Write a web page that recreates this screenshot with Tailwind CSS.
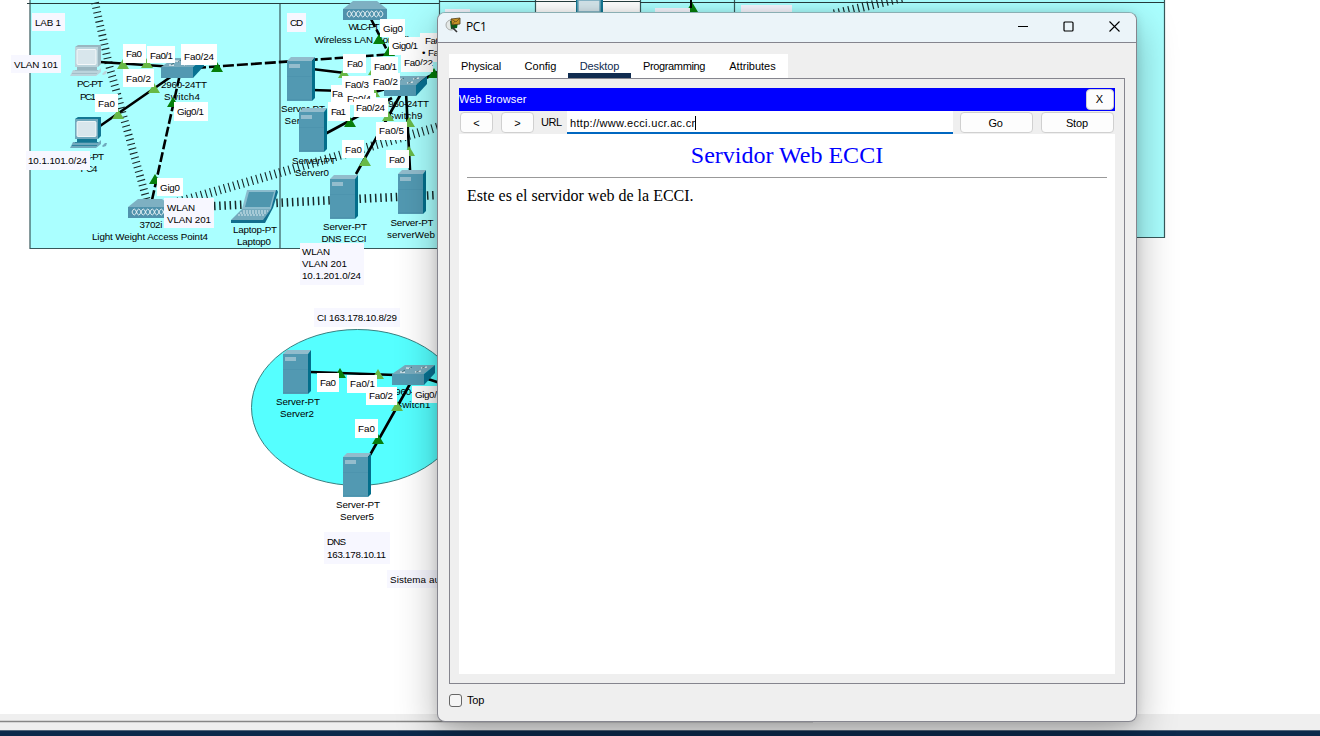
<!DOCTYPE html>
<html lang="es">
<head>
<meta charset="utf-8">
<title>PC1</title>
<script src="https://cdn.jsdelivr.net/npm/@tailwindcss/browser@4"></script>
</head>
<body class="relative h-[736px] w-[1320px] overflow-hidden bg-white font-['Liberation_Sans',sans-serif] text-[11px] text-black">
<!-- Network topology canvas -->
<svg class="absolute inset-0" width="1320" height="736" viewBox="0 0 1320 736" font-family="Liberation Sans, sans-serif" font-size="9.800">
  <defs>
    <g id="server">
      <path d="M0 4L4 0H28L25 4Z" fill="#92bccc"/><path d="M25 4L28 0V41L25 44Z" fill="#036e8b"/>
      <path d="M0 4H25V44H0Z" fill="#5299b2"/><path d="M2 7H13V11H2Z" fill="#94bdcd"/><path d="M0 19.5H25M0 42.5H25" stroke="#4a91ab" stroke-width=".6"/>
    </g>
    <g id="switch">
      <path d="M0 9L13 0H43L32 9Z" fill="#78abbd"/><path d="M32 9L43 0V8L32 20Z" fill="#087292"/><path d="M0 9H32V20H0Z" fill="#5299b2"/>
      <path d="M14 3l5 .3M8 7l5 .3M29 3l6-1M23 7l6-1" stroke="#fff" stroke-width="1.1"/><path d="M17 4l3-2M10 7l3-2M30 3l3-1M24 7l3-1" stroke="#24515f" stroke-width=".7"/>
    </g>
    <g id="ap">
      <path d="M0 8L10 0H34L44 8Z" fill="#7eb0c2"/><path d="M0 8H44V19H0Z" fill="#5092ac"/>
      <path d="M4 13q2.250-6 4.500 0t4.500 0 4.500 0 4.500 0 4.500 0 4.500 0 4.500 0 4.500 0M4 13q2.250 6 4.500 0t4.500 0 4.500 0 4.500 0 4.500 0 4.500 0 4.500 0 4.500 0" fill="none" stroke="#eef6f8" stroke-width=".9"/>
    </g>
    <g id="pc">
      <path d="M5 2L8 0H31V19L28 22H5Z" fill="var(--d)"/><path d="M5 2H28V22H5Z" fill="var(--m)"/><rect x="7" y="4.500" width="19" height="15" rx="1" fill="#d8e6ec" stroke="#fff" stroke-width=".8"/>
      <path d="M7 22H27V25H7Z" fill="var(--d)"/><path d="M3 25H29L31 23V27L26 31H0Z" fill="var(--m)"/><path d="M5 25.500H28M2 28.500H27" stroke="var(--d)" stroke-width=".7"/><path d="M32 29l3-3 2 0-1 3-3 1z" fill="var(--m)"/>
    </g>
    <path id="tri" d="M-6 9L0-1L6 9Z"/>
  </defs>
  <!-- Areas -->
  <path d="M30 0H535V248H30ZM640 0H1164V238H640Z" fill="#aaffff"/>
  <path d="M30 0V248.500H535M280 3V248M439.500 0V248M535.500 0V248M640.500 0V238M734.500 0V238M1164.500 0V237.500H640" fill="none" stroke="#38595b" stroke-width="1.2"/>
  <path d="M27 3.500H439M439 1.500H640M640 2.500H1164" stroke="#263c3d" stroke-width="1.2"/>
  <ellipse cx="357.500" cy="407.500" rx="106" ry="78" fill="#55ffff" stroke="#397f80" stroke-width="1"/>
  <!-- Wireless links -->
  <g fill="none" stroke="#19292a">
    <path d="M94-2L109 65L147 201" stroke-width="8" stroke-dasharray="1.100 3.600"/>
    <path d="M178 202L438 127" stroke-width="9" stroke-dasharray="1.100 3.700"/>
    <path d="M214 206L438 195" stroke-width="8.500" stroke-dasharray="1.500 3.700"/>
    <path d="M834 14L905-3" stroke-width="9" stroke-dasharray="1.200 3.700"/>
  </g>
  <!-- Cables -->
  <g fill="none" stroke="#000" stroke-width="2.600">
    <path d="M100 62L175 67M100 126L172 76M311 372L395 375M415 375L357 478M428 379L440 383"/>
    <path d="M152 200L180 74" stroke-dasharray="10 3"/>
    <path d="M195 68L395 54" stroke-dasharray="11 3"/><path d="M371 19L389 54" stroke-dasharray="9 3"/>
    <path d="M312 69L345 73M312 90L375 92L408 83M325 134L392 98M356 174L402 92M410 170L406 92M416 83L440 71"/>
  </g>
  <!-- Devices -->
  <use href="#pc" x="70" y="45" style="--m:#bbd4dc;--d:#9ab6c0"/>
  <use href="#pc" x="70" y="117" style="--m:#70a9bd;--d:#137793"/>
  <use href="#switch" x="161" y="58"/><use href="#switch" x="384" y="76"/><use href="#switch" x="392" y="365"/>
  <use href="#ap" x="128" y="199"/><use href="#ap" x="343" y="1"/>
  <use href="#server" x="283" y="350"/><use href="#server" x="343" y="453"/><use href="#server" x="287" y="57"/>
  <use href="#server" x="330" y="175"/><use href="#server" x="398" y="170"/>
  <path d="M576 0H603V12H576Z" fill="#137793"/><path d="M578 0H600V12H578Z" fill="#d5e6ec" stroke="#70a9bd" stroke-width="1.500"/>
  <path d="M247 191L249 190H277L278 192L273 208L265 223H262Z" fill="#126f8e"/><path d="M247 190H276L271 209H242Z" fill="#8bbccd"/><path d="M249 192H274L270 207H245Z" fill="#4e96ae"/>
  <path d="M242 209H271L263 220H231Z" fill="#75aabd"/><path d="M231 220H262V223H231Z" fill="#126f8e"/><path d="M243 211H268M240 213H266M238 215H264" stroke="#d7eaf0" stroke-dasharray="2 1"/>
  <!-- Device captions -->
  <g text-anchor="middle">
    <text x="90" y="87" textLength="26">PC-PT</text><text x="88" y="100" textLength="16">PC1</text>
    <text x="91" y="160" textLength="26">PC-PT</text><text x="89" y="172" textLength="17">PC4</text>
    <text x="184" y="88" textLength="46">2960-24TT</text><text x="182" y="100" textLength="36">Switch4</text>
    <text x="151" y="228" textLength="23">3702i</text><text x="150" y="240" textLength="116">Light Weight Access Point4</text>
    <text x="255" y="233" textLength="44">Laptop-PT</text><text x="254" y="245" textLength="34">Laptop0</text>
    <text x="364" y="30" textLength="31">WLC-PT</text><text x="366" y="43" textLength="103">Wireless LAN Controller</text>
    <text x="303" y="112" textLength="44">Server-PT</text><text x="302" y="124" textLength="35">Server1</text>
    <text x="406" y="107" textLength="46">2960-24TT</text><text x="405" y="119" textLength="35">Switch9</text>
    <text x="314" y="164" textLength="44">Server-PT</text><text x="312" y="176" textLength="34">Server0</text>
    <text x="345" y="230" textLength="44">Server-PT</text><text x="344" y="242" textLength="45">DNS ECCI</text>
    <text x="412" y="226" textLength="43">Server-PT</text><text x="411" y="238" textLength="48">serverWeb</text>
    <text x="298" y="405" textLength="44">Server-PT</text><text x="297" y="417" textLength="34">Server2</text>
    <text x="358" y="508" textLength="44">Server-PT</text><text x="357" y="520" textLength="34">Server5</text>
    <text x="413" y="395" textLength="46">2960-24TT</text><text x="413" y="408" textLength="35">Switch1</text>
  </g>
  <use href="#server" x="299" y="108"/>
  <!-- Port status markers -->
  <g fill="#68b946">
    <use href="#tri" x="123" y="60"/><use href="#tri" x="147" y="59"/><use href="#tri" x="154" y="84"/><use href="#tri" x="118" y="110"/>
    <use href="#tri" x="344" y="69"/><use href="#tri" x="374" y="66"/><use href="#tri" x="374" y="88"/><use href="#tri" x="388" y="112"/><use href="#tri" x="409" y="118"/>
    <use href="#tri" x="365" y="157"/><use href="#tri" x="409" y="147"/><use href="#tri" x="378" y="370"/><use href="#tri" x="397" y="402"/>
  </g>
  <g fill="#067f0b">
    <use href="#tri" x="217" y="63"/><use href="#tri" x="173" y="98"/><use href="#tri" x="155" y="175"/><use href="#tri" x="379" y="35"/><use href="#tri" x="389" y="47"/>
    <use href="#tri" x="434" y="69"/><use href="#tri" x="350" y="118"/><use href="#tri" x="340" y="369"/><use href="#tri" x="378" y="435"/><use href="#tri" x="692" y="3"/>
  </g>
  <path d="M691 0V8" stroke="#000" stroke-width="2"/>
  <!-- Port labels -->
  <g fill="#fff">
    <path d="M123 44h23v19h-23zM147 46h28v17h-28zM181 44h36v21h-36zM123 69h31v18h-31zM95 94h23v18h-23zM174 102h34v19h-34zM157 178h26v18h-26z"/>
    <path d="M380 19h25v18h-25zM389 37h31v18h-31zM420 33h18v29h-18zM401 54h32v18h-32zM343 54h23v19h-23zM371 57h27v17h-27zM331 85h18v18h-18zM346 93h30v12h-30zM342 76h32v17h-32zM371 73h29v17h-29zM328 102h22v19h-22zM354 98h34v19h-34zM376 122h31v18h-31zM342 140h22v18h-22zM386 150h23v18h-23z"/>
    <path d="M317 373h22v19h-22zM347 375h30v18h-30zM366 387h31v18h-31zM412 386h26v17h-26zM355 419h23v19h-23z"/>
  </g>
  <text x="126" y="57" textLength="16">Fa0</text><text x="150" y="59" textLength="23">Fa0/1</text><text x="184" y="60" textLength="30">Fa0/24</text>
  <text x="126" y="82" textLength="25">Fa0/2</text><text x="98" y="107" textLength="17">Fa0</text><text x="177" y="115" textLength="27">Gig0/1</text><text x="160" y="191" textLength="20">Gig0</text>
  <text x="383" y="32" textLength="20">Gig0</text><text x="392" y="49" textLength="26">Gig0/1</text><text x="425" y="44" textLength="16">Fa0</text><text x="422" y="56" textLength="4">•</text><text x="428" y="56" textLength="16">Fa0</text>
  <text x="404" y="66" textLength="29">Fa0/22</text><path d="M420 65H432V70H420Z" fill="#fff"/><text x="347" y="67" textLength="16">Fa0</text><text x="374" y="70" textLength="23">Fa0/1</text>
  <text x="332" y="97" textLength="11">Fa</text><text x="347" y="102" textLength="24">Fa0/4</text><path d="M342 76h29v17h-29zM354 99h34v18h-34z" fill="#fff"/>
  <text x="345" y="88" textLength="24">Fa0/3</text><text x="373" y="85" textLength="25">Fa0/2</text><text x="331" y="115" textLength="15">Fa1</text><text x="356" y="111" textLength="29">Fa0/24</text>
  <text x="379" y="134" textLength="25">Fa0/5</text><text x="345" y="153" textLength="17">Fa0</text><text x="389" y="163" textLength="16">Fa0</text>
  <text x="320" y="386" textLength="16">Fa0</text><text x="350" y="387" textLength="25">Fa0/1</text><text x="369" y="399" textLength="24">Fa0/2</text><text x="415" y="398" textLength="27">Gig0/1</text><text x="358" y="432" textLength="17">Fa0</text>
  <!-- Notes -->
  <path d="M32 13h33v18H32zM11 55h50v18H11zM26 151h64v19H26zM164 198h50v30h-50zM287 13h19v19h-19zM300 243h64v42h-64zM314 308h86v19h-86zM324 532h66v32h-66zM387 570h60v18h-60zM445 9h25v10h-25zM655 8h35v10h-35zM741 5h51v10h-51z" fill="#f7f7ff"/>
  <text x="35" y="26" textLength="26">LAB 1</text><text x="14" y="68" textLength="44">VLAN 101</text><text x="28" y="164" textLength="59">10.1.101.0/24</text>
  <text x="167" y="211" textLength="28">WLAN</text><text x="167" y="223" textLength="44">VLAN 201</text><text x="290" y="26" textLength="13">CD</text>
  <text x="302" y="255" textLength="28">WLAN</text><text x="302" y="267" textLength="45">VLAN 201</text><text x="302" y="279" textLength="59">10.1.201.0/24</text>
  <text x="317" y="321" textLength="80">CI 163.178.10.8/29</text><text x="327" y="545" textLength="19">DNS</text><text x="327" y="558" textLength="59">163.178.10.11</text>
  <text x="390" y="583" textLength="97">Sistema autónomo 10</text>
  <!-- Status strip and taskbar -->
  <path d="M0 714H1320V730H0Z" fill="#efefef"/><path d="M0 721.500H813" stroke="#868686" stroke-width="1.500"/><path d="M0 730H1320V736H0Z" fill="#0c294b"/><path d="M0 730.500H1320" stroke="#53657a"/>
</svg>

<!-- PC1 window -->
<main class="absolute left-[437px] top-3 flex h-[710px] w-[700px] flex-col overflow-hidden rounded-lg border border-[#85858e] border-t-[#8aaeb3] bg-[#efefef] shadow-[0_14px_40px_rgba(0,0,0,0.3),0_1px_10px_rgba(0,0,0,0.12)]">
  <header class="flex h-[30px] shrink-0 items-center border-b border-[#85858e] bg-[#ebf4f9] pl-[7px]">
    <svg class="mb-1" width="17" height="17" viewBox="0 0 17 17"><circle cx="6" cy="8" r="5" fill="#e4e8e6" stroke="#a8aaa8"/><path d="M5 4L13 5L12 11L6 12Z" fill="#075c16"/><path d="M6 2L15 1V7L7 8Z" fill="#c69325" stroke="#4d3c1c" stroke-width=".8"/><path d="M6 2L11 5L15 1M7 8l3-4" fill="none" stroke="#65491a" stroke-width=".7"/><path d="M7 10L12 15" stroke="#343434" stroke-width="1.600"/></svg>
    <h1 class="ml-1 flex-1 pb-px font-['Open_Sans',sans-serif] text-[12px] leading-4 tracking-[-0.4px]">PC1</h1>
    <div class="flex items-center gap-[35px] pr-4 pb-[3px]">
      <svg width="10" height="11" viewBox="0 0 10 11"><path d="M0 5.500H10" stroke="#000"/></svg>
      <svg width="11" height="11" viewBox="0 0 11 11"><rect x="1" y="1" width="9" height="9" rx="1" fill="none" stroke="#000" stroke-width="1.200"/></svg>
      <svg width="11" height="11" viewBox="0 0 11 11"><path d="M.5 .5L10.500 10.500M10.500 .5L.5 10.500" stroke="#000" stroke-width="1.100"/></svg>
    </div>
  </header>
  <nav class="ml-[11px] mt-[11px] flex h-6 w-[339px] shrink-0 bg-white text-center leading-6">
    <span class="w-16 tracking-[-0.1px]">Physical</span>
    <span class="w-[55px]">Config</span>
    <span class="w-[63px] border-b-[5px] border-[#102c50] tracking-[-0.1px] text-[#102c50]">Desktop</span>
    <span class="w-[86px] tracking-[-0.35px]">Programming</span>
    <span class="w-[71px]">Attributes</span>
  </nav>
  <section class="ml-[11px] flex h-[606px] w-[676px] shrink-0 flex-col border border-[#85858e] px-[9px] pb-[9px] pt-[9px]">
    <div class="flex h-[23px] shrink-0 items-center justify-between bg-[#0000ff] pr-px text-white">
      <span class="tracking-[0.15px]">Web Browser</span>
      <button class="h-[21px] w-7 rounded border border-[#d0d0d0] bg-[#fdfdfd] pr-px text-black">X</button>
    </div>
    <div class="flex h-[23px] shrink-0 items-center pl-px pr-px">
      <button class="h-[21px] w-[33px] rounded border border-[#d0d0d0] bg-[#fdfdfd] pt-px">&lt;</button>
      <button class="ml-2 h-[21px] w-[33px] rounded border border-[#d0d0d0] bg-[#fdfdfd] pt-px">&gt;</button>
      <label class="ml-[7px] w-[26px]"><span class="tracking-[-0.5px]">URL</span></label>
      <div class="flex h-[23px] w-[386px] items-center border-b-2 border-[#0067c0] bg-white pl-[3px] pt-[3px]"><span class="tracking-[0.3px]">http://www.ecci.ucr.ac.cr</span><i class="h-[14px] w-px bg-black"></i></div>
      <button class="ml-[7px] h-[21px] w-[73px] rounded border border-[#d0d0d0] bg-[#fdfdfd] pr-0.5 pt-px tracking-[-0.3px]">Go</button>
      <button class="ml-2 h-[21px] w-[73px] rounded border border-[#d0d0d0] bg-[#fdfdfd] pr-px pt-px tracking-[-0.1px]">Stop</button>
    </div>
    <article class="flex-1 bg-white px-2 pt-[7px] font-['Liberation_Serif',serif]">
      <h2 class="text-center text-[24px] leading-[28px] text-[#0000ff]">Servidor Web ECCI</h2>
      <hr class="mt-2 border-[#999]">
      <p class="mt-2 text-[16px] leading-5">Este es el servidor web de la ECCI.</p>
    </article>
  </section>
  <label class="ml-[11px] mt-[9px] flex items-center gap-[5px]"><i class="size-[13px] rounded-[3px] border border-[#666] bg-[#f5f5f5]"></i><span class="leading-[14px] tracking-[-0.2px]">Top</span></label>
</main>
</body>
</html>
